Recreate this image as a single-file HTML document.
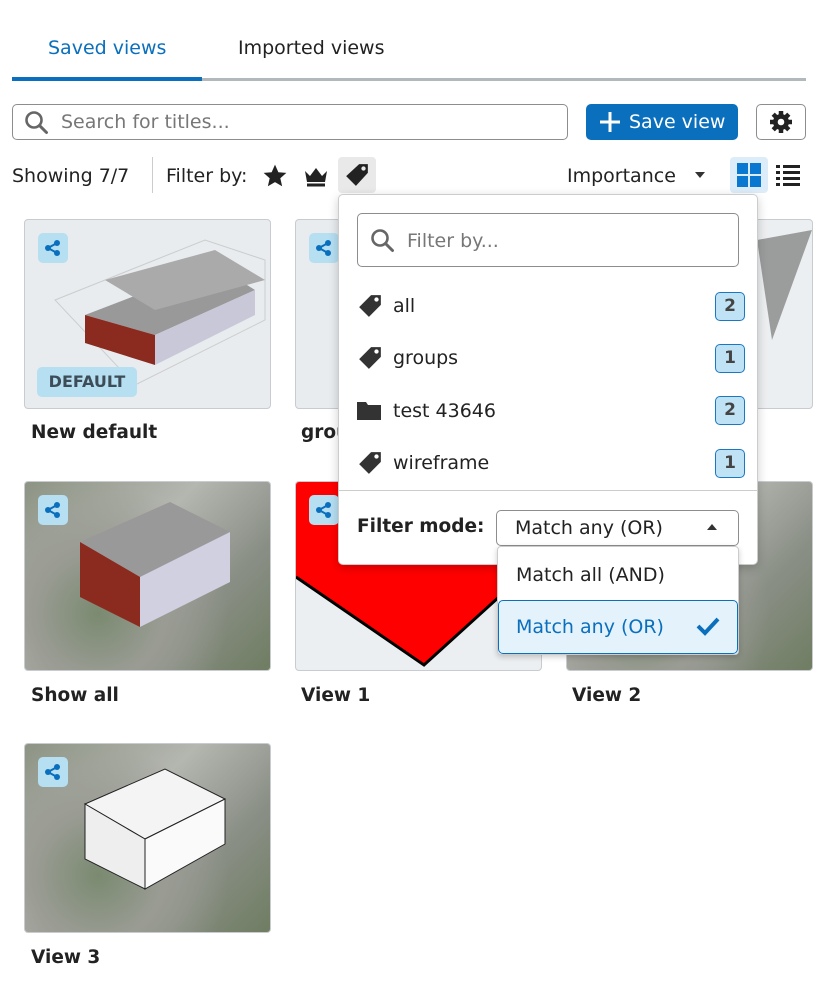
<!DOCTYPE html>
<html><head><meta charset="utf-8"><style>
*{box-sizing:border-box;margin:0;padding:0}
body{width:823px;height:987px;background:#fff;font-family:"DejaVu Sans","Liberation Sans",sans-serif;color:#222;position:relative;overflow:hidden;font-size:19px}
.abs{position:absolute}
.tab{position:absolute;top:37px;font-size:19px}
.card{position:absolute;width:247px;height:190px;border:1px solid #c8ccd0;border-radius:4px;overflow:hidden;background:#e8ecef}
.share{position:absolute;left:13px;top:13px;width:30px;height:30px;border-radius:5px;background:#b6dff2;display:flex;align-items:center;justify-content:center}
.title{position:absolute;font-weight:bold;font-size:18.5px;color:#222}
.badge{position:absolute;left:715px;width:30px;height:29px;border:1.5px solid #1a78c2;border-radius:5px;background:#bfe3f5;color:#444;font-weight:bold;font-size:17px;text-align:center;line-height:26px}
.item{position:absolute;left:393px;font-size:19px}
.ico{position:absolute;left:357px}
.aerial{background:radial-gradient(circle at 30% 70%,#7a8a70 0,#9a9c94 30%,transparent 60%),linear-gradient(135deg,#8d9484,#b4b6b0 40%,#8a8f86 70%,#6f7d62)}
</style></head><body>
<div class="tab" style="left:48px;color:#0a6fbd">Saved views</div>
<div class="tab" style="left:238px">Imported views</div>
<div class="abs" style="left:12px;top:78px;width:794px;height:3px;background:#b2b9bd"></div>
<div class="abs" style="left:12px;top:77px;width:190px;height:4px;background:#0a6fbd"></div>

<div class="abs" style="left:12px;top:104px;width:556px;height:36px;border:1px solid #8d8d8d;border-radius:5px"></div>
<svg class="abs" style="left:24px;top:110px" width="26" height="26" viewBox="0 0 26 26"><circle cx="10" cy="10" r="7.5" fill="none" stroke="#666" stroke-width="2.6"/><path d="M15.5 15.5l7 7" stroke="#666" stroke-width="3" stroke-linecap="round"/></svg>
<div class="abs" style="left:61px;top:111px;color:#777">Search for titles...</div>
<div class="abs" style="left:586px;top:104px;width:152px;height:36px;background:#0a6fbd;border-radius:5px;color:#fff;line-height:36px;padding-left:43px">Save view</div>
<svg class="abs" style="left:598px;top:110px" width="24" height="24"><path d="M12 2v20M2 12h20" stroke="#fff" stroke-width="3"/></svg>
<div class="abs" style="left:756px;top:104px;width:50px;height:36px;border:1px solid #8d8d8d;border-radius:5px"></div>
<svg class="abs" style="left:768px;top:109px" width="26" height="26" viewBox="0 0 26 26"><g fill="#222"><circle cx="13" cy="13" r="8"/><g stroke="#222" stroke-width="4.5"><path d="M13 2v22M2 13h22M5.2 5.2l15.6 15.6M20.8 5.2L5.2 20.8"/></g></g><circle cx="13" cy="13" r="3.3" fill="#fff"/></svg>

<div class="abs" style="left:12px;top:165px">Showing 7/7</div>
<div class="abs" style="left:152px;top:157px;width:1px;height:36px;background:#ccc"></div>
<div class="abs" style="left:166px;top:165px">Filter by:</div>
<svg class="abs" style="left:262px;top:163px" width="26" height="26" viewBox="0 0 24 24"><path d="M12 1.5l3.1 7 7.4.6-5.6 5 1.7 7.4L12 17.6l-6.6 3.9 1.7-7.4-5.6-5 7.4-.6z" fill="#222"/></svg>
<svg class="abs" style="left:303px;top:164px" width="26" height="24" viewBox="0 0 26 24"><path d="M2 7l5 5 6-8 6 8 5-5-2 11H4z" fill="#222"/><rect x="4" y="19.5" width="18" height="3" fill="#222"/></svg>
<div class="abs" style="left:338px;top:157px;width:38px;height:36px;background:#e9e9e9;border-radius:4px"></div>
<svg class="abs" style="left:344px;top:162px" width="26" height="26" viewBox="0 0 24 24"><path d="M14 2h8v8L11 22 2 13z" fill="#222"/><circle cx="18" cy="6" r="2" fill="#e9e9e9"/></svg>
<div class="abs" style="left:567px;top:165px">Importance</div>
<svg class="abs" style="left:694px;top:170px" width="12" height="10"><path d="M1 2h10L6 8z" fill="#333"/></svg>
<div class="abs" style="left:730px;top:157px;width:38px;height:36px;background:#dcecf8;border-radius:4px"></div>
<svg class="abs" style="left:737px;top:163px" width="24" height="24"><g fill="#0a78d0"><rect x="0" y="0" width="11" height="11"/><rect x="13" y="0" width="11" height="11"/><rect x="0" y="13" width="11" height="11"/><rect x="13" y="13" width="11" height="11"/></g></svg>
<svg class="abs" style="left:776px;top:164px" width="24" height="22"><g fill="#222"><rect x="0" y="1" width="4" height="3"/><rect x="7" y="1" width="17" height="3"/><rect x="0" y="7" width="4" height="3"/><rect x="7" y="7" width="17" height="3"/><rect x="0" y="13" width="4" height="3"/><rect x="7" y="13" width="17" height="3"/><rect x="0" y="19" width="4" height="3"/><rect x="7" y="19" width="17" height="3"/></g></svg>

<!-- cards -->
<div class="card" style="left:24px;top:219px"><svg width="247" height="190"><path d="M30 80l150-60 60 20v60L110 165z" fill="none" stroke="#ccc"/><path d="M60 95l130-50 40 25-100 45z" fill="#999"/><path d="M60 95l70 20v30l-70-22z" fill="#8b2a1f"/><path d="M130 115l100-45v25l-100 50z" fill="#c8c8d8"/><path d="M80 60l110-30 50 30-110 30z" fill="#aaa"/></svg><div class="share"><svg width="18" height="18" viewBox="0 0 18 18"><g fill="#0a6fbd"><circle cx="13" cy="4" r="3"/><circle cx="4" cy="9" r="3"/><circle cx="13" cy="14" r="3"/></g><path d="M13 4L4 9l9 5" stroke="#0a6fbd" stroke-width="2" fill="none"/></svg></div><div class="abs" style="left:12px;top:147px;width:100px;height:30px;background:#b6dff2;border-radius:5px;color:#3d4d58;font-weight:bold;font-size:16px;text-align:center;line-height:30px">DEFAULT</div></div>
<div class="title" style="left:31px;top:422px">New default</div>
<div class="card" style="left:295px;top:219px"><div class="share"><svg width="18" height="18" viewBox="0 0 18 18"><g fill="#0a6fbd"><circle cx="13" cy="4" r="3"/><circle cx="4" cy="9" r="3"/><circle cx="13" cy="14" r="3"/></g><path d="M13 4L4 9l9 5" stroke="#0a6fbd" stroke-width="2" fill="none"/></svg></div></div>
<div class="title" style="left:301px;top:422px">groups</div>
<div class="card" style="left:566px;top:219px;background:#eceff1"><svg width="247" height="190"><path d="M190 20l55-10-40 110z" fill="#666" opacity=".6"/></svg></div>

<div class="card aerial" style="left:24px;top:481px"><svg width="247" height="190"><path d="M55 60l90-40 60 30-90 45z" fill="#999"/><path d="M55 60l60 35v50l-60-30z" fill="#8b2a1f"/><path d="M115 95l90-45v50l-90 45z" fill="#d0d0e0"/></svg><div class="share"><svg width="18" height="18" viewBox="0 0 18 18"><g fill="#0a6fbd"><circle cx="13" cy="4" r="3"/><circle cx="4" cy="9" r="3"/><circle cx="13" cy="14" r="3"/></g><path d="M13 4L4 9l9 5" stroke="#0a6fbd" stroke-width="2" fill="none"/></svg></div></div>
<div class="title" style="left:31px;top:685px">Show all</div>
<div class="card" style="left:295px;top:481px;background:#eceff1"><svg width="247" height="190"><path d="M0 0h247v75L128 183 0 95z" fill="#f00"/><path d="M0 95l128 88 119-108" fill="none" stroke="#000" stroke-width="3"/></svg><div class="share"><svg width="18" height="18" viewBox="0 0 18 18"><g fill="#0a6fbd"><circle cx="13" cy="4" r="3"/><circle cx="4" cy="9" r="3"/><circle cx="13" cy="14" r="3"/></g><path d="M13 4L4 9l9 5" stroke="#0a6fbd" stroke-width="2" fill="none"/></svg></div></div>
<div class="title" style="left:301px;top:685px">View 1</div>
<div class="card aerial" style="left:566px;top:481px"></div>
<div class="title" style="left:572px;top:685px">View 2</div>

<div class="card aerial" style="left:24px;top:743px"><svg width="247" height="190"><path d="M60 60l80-35 60 30-80 40z" fill="#f4f4f4" stroke="#222"/><path d="M60 60l60 35v50l-60-30z" fill="#eee" stroke="#222"/><path d="M120 95l80-40v45l-80 45z" fill="#fafafa" stroke="#222"/></svg><div class="share"><svg width="18" height="18" viewBox="0 0 18 18"><g fill="#0a6fbd"><circle cx="13" cy="4" r="3"/><circle cx="4" cy="9" r="3"/><circle cx="13" cy="14" r="3"/></g><path d="M13 4L4 9l9 5" stroke="#0a6fbd" stroke-width="2" fill="none"/></svg></div></div>
<div class="title" style="left:31px;top:947px">View 3</div>

<!-- dropdown -->
<div class="abs" style="left:338px;top:194px;width:420px;height:371px;background:#fff;border:1px solid #ccc;border-radius:5px;box-shadow:0 3px 10px rgba(0,0,0,.2)"></div>
<div class="abs" style="left:357px;top:213px;width:382px;height:54px;border:1px solid #8d8d8d;border-radius:5px"></div>
<svg class="abs" style="left:370px;top:228px" width="26" height="26" viewBox="0 0 26 26"><circle cx="10" cy="10" r="7.5" fill="none" stroke="#666" stroke-width="2.6"/><path d="M15.5 15.5l7 7" stroke="#666" stroke-width="3" stroke-linecap="round"/></svg>
<div class="abs" style="left:407px;top:230px;color:#777">Filter by...</div>

<svg class="ico" style="top:293px" width="26" height="26" viewBox="0 0 24 24"><path d="M13 2h9v9L11 22 2 13z" fill="#333"/><circle cx="18" cy="6" r="2" fill="#fff"/></svg>
<div class="item" style="top:295px">all</div><div class="badge" style="top:292px">2</div>
<svg class="ico" style="top:345px" width="26" height="26" viewBox="0 0 24 24"><path d="M13 2h9v9L11 22 2 13z" fill="#333"/><circle cx="18" cy="6" r="2" fill="#fff"/></svg>
<div class="item" style="top:347px">groups</div><div class="badge" style="top:344px">1</div>
<svg class="ico" style="top:400px" width="24" height="20" viewBox="0 0 24 20"><path d="M0 2h9l2 3h13v15H0z" fill="#333"/></svg>
<div class="item" style="top:400px">test 43646</div><div class="badge" style="top:396px">2</div>
<svg class="ico" style="top:450px" width="26" height="26" viewBox="0 0 24 24"><path d="M13 2h9v9L11 22 2 13z" fill="#333"/><circle cx="18" cy="6" r="2" fill="#fff"/></svg>
<div class="item" style="top:452px">wireframe</div><div class="badge" style="top:449px">1</div>

<div class="abs" style="left:339px;top:490px;width:418px;height:1px;background:#ccc"></div>
<div class="abs" style="left:357px;top:516px;font-weight:bold;font-size:18.5px">Filter mode:</div>
<div class="abs" style="left:496px;top:510px;width:243px;height:36px;border:1px solid #8d8d8d;border-radius:5px;padding-left:18px;line-height:34px">Match any (OR)</div>
<svg class="abs" style="left:706px;top:522px" width="12" height="10"><path d="M1 8h10L6 2z" fill="#333"/></svg>
<div class="abs" style="left:497px;top:546px;width:242px;height:109px;background:#fff;border:1px solid #ccc;border-radius:4px;box-shadow:0 2px 6px rgba(0,0,0,.2)"></div>
<div class="abs" style="left:516px;top:564px">Match all (AND)</div>
<div class="abs" style="left:498px;top:600px;width:240px;height:54px;background:#e3f2fb;border:1.5px solid #0a6fbd;border-radius:5px;color:#0a6fbd;padding-left:17px;line-height:52px">Match any (OR)</div>
<svg class="abs" style="left:695px;top:615px" width="26" height="22"><path d="M3 11l7 7L23 4" stroke="#0a6fbd" stroke-width="4" fill="none"/></svg>
</body></html>
